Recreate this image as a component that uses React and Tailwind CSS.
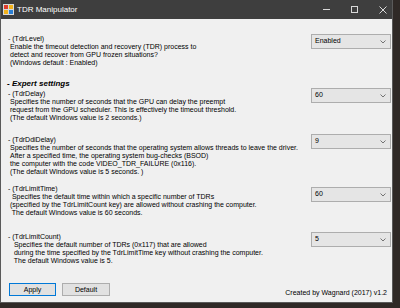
import React from 'react'

const font = { fontFamily: '"Liberation Sans", Arial, sans-serif' }

const sections = [
  {
    key: 'TdrLevel',
    mt: 'mt-[16px]',
    ddOffset: '-mt-[1px]',
    value: 'Enabled',
    lines: [
      'Enable the timeout detection and recovery (TDR) process to',
      'detect and recover from GPU frozen situations?',
      '(Windows default : Enabled)',
    ],
  },
  {
    key: 'TdrDelay',
    mt: 'mt-[2px]',
    ddOffset: '-mt-[2px]',
    value: '60',
    lines: [
      'Specifies the number of seconds that the GPU can delay the preempt',
      'request from the GPU scheduler. This is effectively the timeout threshold.',
      '(The default Windows value is 2 seconds.)',
    ],
  },
  {
    key: 'TdrDdiDelay',
    mt: 'mt-[14px]',
    ddOffset: '-mt-[2px]',
    value: '9',
    lines: [
      'Specifies the number of seconds that the operating system allows threads to leave the driver.',
      'After a specified time, the operating system bug-checks (BSOD)',
      'the computer with the code VIDEO_TDR_FAILURE (0x116).',
      '(The default Windows value is 5 seconds. )',
    ],
  },
  {
    key: 'TdrLimitTime',
    mt: 'mt-[9px]',
    ddOffset: 'mt-[2px]',
    value: '60',
    lines: [
      ' Specifies the default time within which a specific number of TDRs',
      '(specified by the TdrLimitCount key) are allowed without crashing the computer.',
      ' The default Windows value is 60 seconds.',
    ],
  },
  {
    key: 'TdrLimitCount',
    mt: 'mt-[16px]',
    ddOffset: '-mt-[1px]',
    value: '5',
    lines: [
      '  Specifies the default number of TDRs (0x117) that are allowed',
      '  during the time specified by the TdrLimitTime key without crashing the computer.',
      '  The default Windows value is 5.',
    ],
  },
]

function AppIcon() {
  return (
    <svg width="11" height="11" viewBox="0 0 11 11">
      <rect x="0" y="0" width="11" height="11" fill="#d9d9d9" />
      <rect x="1" y="1" width="4" height="4" fill="#e03c2c" />
      <rect x="6" y="1" width="4" height="4" fill="#f2b21b" />
      <rect x="1" y="6" width="4" height="4" fill="#f2b21b" />
      <rect x="6" y="6" width="4" height="4" fill="#2a7fd4" />
    </svg>
  )
}

function Dropdown({ value, offset }) {
  return (
    <div
      className={`${offset} flex h-[15px] w-[80px] shrink-0 items-center justify-between border border-[#adadad] bg-[#e5e5e5] pl-[3px] pr-[4px] text-[7px] text-black`}
    >
      <span>{value}</span>
      <svg width="6" height="4" viewBox="0 0 6 4">
        <path d="M0.5 0.5 L3 3 L5.5 0.5" fill="none" stroke="#555" strokeWidth="0.8" />
      </svg>
    </div>
  )
}

function Section({ s }) {
  return (
    <div className={`${s.mt} flex items-start justify-between`}>
      <div className="text-[7px] leading-[8px] text-black whitespace-pre">
        <div className="pl-[7px]">- ({s.key})</div>
        {s.lines.map((l, i) => (
          <div key={i} className="pl-[9px]">
            {l}
          </div>
        ))}
      </div>
      <Dropdown value={s.value} offset={s.ddOffset} />
    </div>
  )
}

export default function App() {
  return (
    <div className="h-[308px] w-[400px] overflow-hidden bg-[#2f2926]" style={font}>
      <div className="flex h-[303px] w-[393px] flex-col border-l border-r border-b border-[#5a5a5a] bg-[#f0f0f0]">
        <div className="flex h-[19px] shrink-0 items-center bg-[#3e3e3e] pl-[2px] pr-[5px]">
          <AppIcon />
          <span className="ml-[3px] text-[8px] text-white">TDR Manipulator</span>
          <div className="ml-auto flex items-center gap-[21px] text-[#d8d8d8]">
            <div className="h-[1px] w-[7px] bg-[#d8d8d8]" />
            <div className="h-[7px] w-[7px] border border-[#d8d8d8]" />
            <svg width="8" height="8" viewBox="0 0 8 8">
              <path d="M0.5 0.5 L7.5 7.5 M7.5 0.5 L0.5 7.5" stroke="#d8d8d8" strokeWidth="1" />
            </svg>
          </div>
        </div>

        <div className="flex flex-1 flex-col pr-[1px]">
          <Section s={sections[0]} />
          <div className="mt-[12px] pl-[6px] text-[8px] font-bold italic leading-[9px] text-black">
            - Expert settings
          </div>
          {sections.slice(1).map((s) => (
            <Section key={s.key} s={s} />
          ))}

          <div className="mt-auto mb-[5px] flex items-end justify-between pl-[8px] pr-[4px]">
            <div className="flex gap-[6px] mb-[1px]">
              <button className="h-[13px] w-[47px] border border-[#0078d7] bg-[#e1e1e1] text-[7px] leading-none text-black">
                Apply
              </button>
              <button className="h-[13px] w-[48px] border border-[#adadad] bg-[#e1e1e1] text-[7px] leading-none text-black">
                Default
              </button>
            </div>
            <span className="text-[7px] leading-[8px] text-black">Created by Wagnard (2017) v1.2</span>
          </div>
        </div>
      </div>
    </div>
  )
}
